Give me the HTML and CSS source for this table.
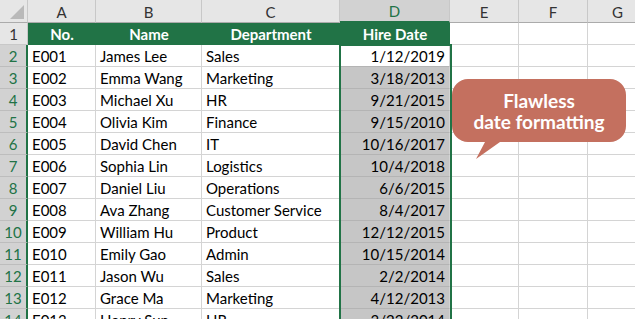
FILE: index.html
```html
<!DOCTYPE html>
<html>
<head>
<meta charset="utf-8">
<link rel="stylesheet" href="styles.css">
</head>
<body>
<div class="sheet">
  <div class="grid">
    <div class="corner"><span class="tri"></span></div>
    <div class="ch">A</div><div class="ch">B</div><div class="ch">C</div><div class="ch ch-sel">D</div><div class="ch">E</div><div class="ch">F</div><div class="ch ch-last">G</div>

    <div class="rh">1</div>
    <div class="hd">No.</div><div class="hd">Name</div><div class="hd">Department</div><div class="hd">Hire Date</div><div class="c"></div><div class="c"></div><div class="c"></div>

    <div class="rh rh-sel">2</div>
    <div class="c">E001</div><div class="c">James Lee</div><div class="c">Sales</div><div class="c d active">1/12/2019</div><div class="c"></div><div class="c"></div><div class="c"></div>

    <div class="rh rh-sel">3</div>
    <div class="c">E002</div><div class="c">Emma Wang</div><div class="c">Marketing</div><div class="c d">3/18/2013</div><div class="c"></div><div class="c"></div><div class="c"></div>

    <div class="rh rh-sel">4</div>
    <div class="c">E003</div><div class="c">Michael Xu</div><div class="c">HR</div><div class="c d">9/21/2015</div><div class="c"></div><div class="c"></div><div class="c"></div>

    <div class="rh rh-sel">5</div>
    <div class="c">E004</div><div class="c">Olivia Kim</div><div class="c">Finance</div><div class="c d">9/15/2010</div><div class="c"></div><div class="c"></div><div class="c"></div>

    <div class="rh rh-sel">6</div>
    <div class="c">E005</div><div class="c">David Chen</div><div class="c">IT</div><div class="c d">10/16/2017</div><div class="c"></div><div class="c"></div><div class="c"></div>

    <div class="rh rh-sel">7</div>
    <div class="c">E006</div><div class="c">Sophia Lin</div><div class="c">Logistics</div><div class="c d">10/4/2018</div><div class="c"></div><div class="c"></div><div class="c"></div>

    <div class="rh rh-sel">8</div>
    <div class="c">E007</div><div class="c">Daniel Liu</div><div class="c">Operations</div><div class="c d">6/6/2015</div><div class="c"></div><div class="c"></div><div class="c"></div>

    <div class="rh rh-sel">9</div>
    <div class="c">E008</div><div class="c">Ava Zhang</div><div class="c">Customer Service</div><div class="c d">8/4/2017</div><div class="c"></div><div class="c"></div><div class="c"></div>

    <div class="rh rh-sel">10</div>
    <div class="c">E009</div><div class="c">William Hu</div><div class="c">Product</div><div class="c d">12/12/2015</div><div class="c"></div><div class="c"></div><div class="c"></div>

    <div class="rh rh-sel">11</div>
    <div class="c">E010</div><div class="c">Emily Gao</div><div class="c">Admin</div><div class="c d">10/15/2014</div><div class="c"></div><div class="c"></div><div class="c"></div>

    <div class="rh rh-sel">12</div>
    <div class="c">E011</div><div class="c">Jason Wu</div><div class="c">Sales</div><div class="c d">2/2/2014</div><div class="c"></div><div class="c"></div><div class="c"></div>

    <div class="rh rh-sel">13</div>
    <div class="c">E012</div><div class="c">Grace Ma</div><div class="c">Marketing</div><div class="c d">4/12/2013</div><div class="c"></div><div class="c"></div><div class="c"></div>

    <div class="rh rh-sel">14</div>
    <div class="c">E013</div><div class="c">Henry Sun</div><div class="c">HR</div><div class="c d">3/22/2014</div><div class="c"></div><div class="c"></div><div class="c"></div>
  </div>

  <div class="selbox"></div>

  <div class="callout">
    <svg class="bubble" width="180" height="86" viewBox="0 0 180 86">
      <path d="M16 0 H158 A16 16 0 0 1 174 16 V47 A16 16 0 0 1 158 63 H48 L24 80 L33 63 H16 A16 16 0 0 1 0 47 V16 A16 16 0 0 1 16 0 Z" fill="#c4705f"/>
    </svg>
    <div class="ctext">Flawless<br>date formatting</div>
  </div>
</div>
</body>
</html>
```
FILE: styles.css
```css
html, body {
  margin: 0;
  padding: 0;
  background: #fff;
  overflow: hidden;
}
.sheet {
  position: relative;
  width: 635px;
  height: 319px;
  overflow: hidden;
  font-family: Lato, "Liberation Sans", sans-serif;
  font-size: 15px;
  color: #000;
}
.grid {
  display: grid;
  grid-template-columns: 28px 68px 106px 138px 110px 69px 69px 60px;
  grid-template-rows: 23px repeat(14, 22px);
}
.grid > div {
  box-sizing: border-box;
}
.corner {
  background: #e6e6e6;
  border-right: 1px solid #c8c8c8;
  border-bottom: 1px solid #ababab;
  position: relative;
}
.tri {
  position: absolute;
  right: 3px;
  bottom: 3px;
  width: 0;
  height: 0;
  border-left: 14px solid transparent;
  border-bottom: 14px solid #b9b9b9;
}
.ch {
  background: #e6e6e6;
  border-right: 1px solid #c8c8c8;
  border-bottom: 1px solid #ababab;
  display: flex;
  align-items: center;
  justify-content: center;
  color: #333;
  font-size: 15px;
  padding-top: 1px;
}
.ch-sel {
  background: #d2d2d2;
  color: #217346;
  border-bottom: 2px solid #217346;
}
.rh {
  background: #e6e6e6;
  border-right: 1px solid #c8c8c8;
  border-bottom: 1px solid #c8c8c8;
  display: flex;
  align-items: center;
  justify-content: center;
  color: #333;
  font-size: 15px;
}
.rh-sel {
  background: #d2d2d2;
  color: #217346;
  border-right: 2px solid #217346;
  border-bottom-color: #bdbdbd;
}
.hd {
  background: #217346;
  color: #fff;
  font-weight: bold;
  display: flex;
  align-items: center;
  justify-content: center;
  border-bottom: 1px solid #217346;
}
.c {
  border-right: 1px solid #d4d4d4;
  border-bottom: 1px solid #d4d4d4;
  display: flex;
  align-items: center;
  padding: 1px 3px 0 4px;
  white-space: nowrap;
  overflow: hidden;
}
.d {
  background: #c6c6c6;
  justify-content: flex-end;
  padding-right: 4px;
  border-bottom-color: #b4b4b4;
}
.d.active {
  background: #fff;
}
.selbox {
  position: absolute;
  left: 339px;
  top: 44px;
  width: 113px;
  height: 300px;
  box-sizing: border-box;
  border: 2px solid #217346;
  pointer-events: none;
}
.callout {
  position: absolute;
  left: 452px;
  top: 79px;
  width: 174px;
  height: 80px;
}
.bubble {
  position: absolute;
  left: 0;
  top: 0;
}
.ctext {
  position: relative;
  width: 174px;
  height: 63px;
  display: flex;
  align-items: center;
  justify-content: center;
  text-align: center;
  color: #fff;
  font-weight: bold;
  font-size: 19px;
  line-height: 21px;
}
```
